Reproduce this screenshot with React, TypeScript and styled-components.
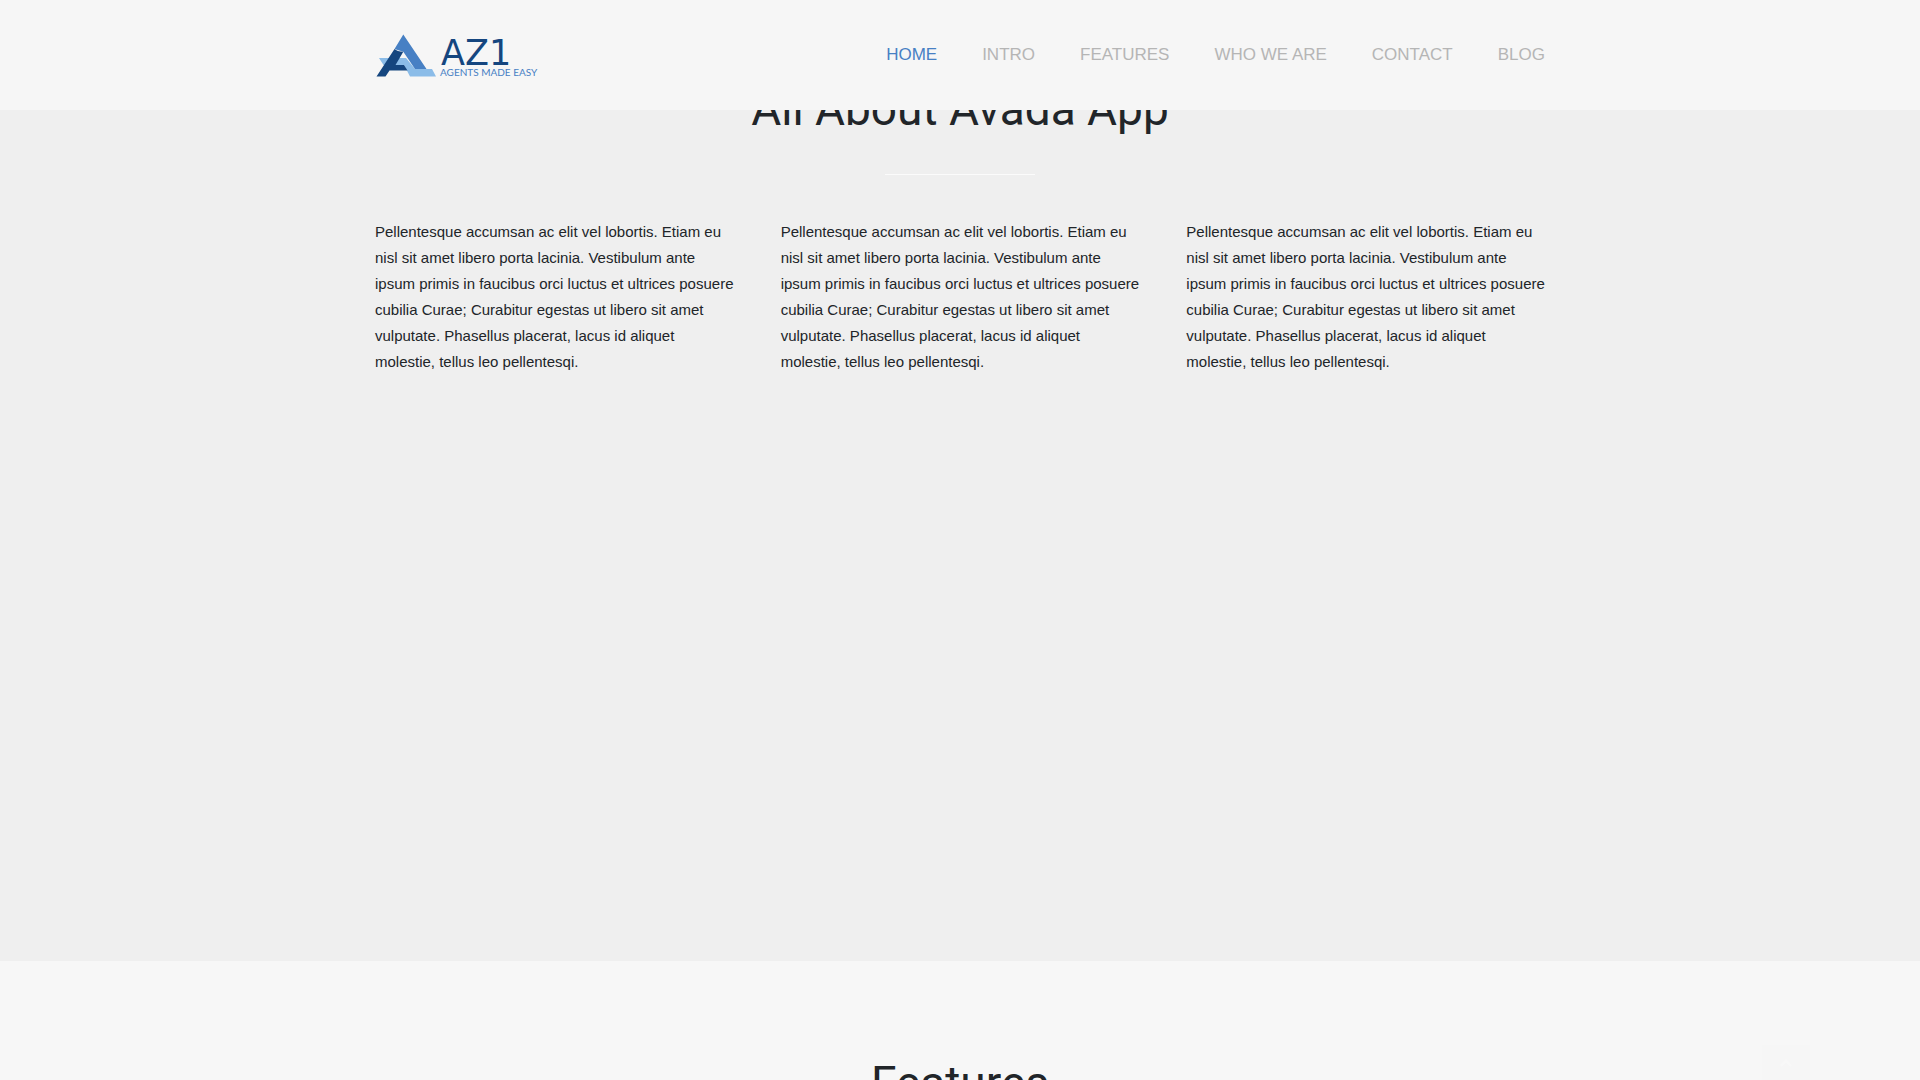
import React from "react";
import styled, { createGlobalStyle } from "styled-components";

const GlobalStyle = createGlobalStyle`
  *, *::before, *::after { box-sizing: border-box; }
  body {
    margin: 0;
    background: #f7f7f7;
    color: #212529;
    font-family: "Liberation Sans", Arial, sans-serif;
    font-size: 15px;
    line-height: 26px;
  }
`;

const Container = styled.div`
  width: 100%;
  max-width: 1230px;
  margin: 0 auto;
  padding: 0 30px;
`;

const Header = styled.header`
  position: fixed;
  top: 0;
  left: 0;
  right: 0;
  z-index: 10;
  background: #f6f6f6;
`;

const HeaderRow = styled(Container)`
  display: flex;
  align-items: center;
  justify-content: space-between;
  min-height: 110px;
`;

const LogoLink = styled.a`
  display: flex;
  text-decoration: none;

  svg {
    overflow: visible;
  }
`;

const Menu = styled.ul`
  display: flex;
  flex-wrap: wrap;
  gap: 0 45px;
  margin: 0;
  padding: 0;
  list-style: none;
`;

const MenuLink = styled.a<{ $active?: boolean }>`
  color: ${({ $active }) => ($active ? "#4780c4" : "#b5b5b5")};
  font-size: 17px;
  line-height: 26px;
  text-decoration: none;
  text-transform: uppercase;
`;

const Section = styled.section<{ $tone: string; $top: number; $bottom: number }>`
  background: ${({ $tone }) => $tone};
  padding: ${({ $top, $bottom }) => `${$top}px 0 ${$bottom}px`};
`;

const Title = styled.h2`
  margin: 0;
  font-family: Roboto, sans-serif;
  font-size: 46px;
  font-weight: 400;
  line-height: 60px;
  text-align: center;
`;

const Divider = styled.hr`
  width: 150px;
  height: 1px;
  margin: 35px auto 44px;
  border: 0;
  background: #fbfbfb;
`;

const Columns = styled.div`
  display: grid;
  grid-template-columns: repeat(3, 1fr);
  gap: 47px;
`;

const Text = styled.p`
  margin: 0;
`;

const ToTop = styled.button`
  position: fixed;
  right: 110px;
  bottom: 0;
  display: flex;
  align-items: center;
  justify-content: center;
  width: 48px;
  height: 35px;
  padding: 0;
  border: 0;
  background: #f6f6f6;
  color: #f8f8f8;
`;

const menu = [
  { label: "Home", href: "#home" },
  { label: "Intro", href: "#intro" },
  { label: "Features", href: "#features" },
  { label: "Who We Are", href: "#who-we-are" },
  { label: "Contact", href: "#contact" },
  { label: "Blog", href: "#blog" },
];

const blurb =
  "Pellentesque accumsan ac elit vel lobortis. Etiam eu nisl sit amet libero porta lacinia. Vestibulum ante ipsum primis in faucibus orci luctus et ultrices posuere cubilia Curae; Curabitur egestas ut libero sit amet vulputate. Phasellus placerat, lacus id aliquet molestie, tellus leo pellentesqi.";

function Logo() {
  return (
    <svg width="164" height="46" viewBox="0 0 164 46" role="img" aria-label="AZ1 Agents Made Easy">
      <path d="M4 26H31L40 37H57L61 44.500H35L29 33H8.500Z" fill="#8bbce8" />
      <path d="M28.300 2.500L51.500 37H40L28.300 19.700L19.500 17Z" fill="#4780c4" />
      <path d="M19.500 17Q22 19.500 28.300 19.700L20.500 33H29L32.500 38.500H14.500L10.500 44.500H1.500Z" fill="#15467f" />
      <text x="66" y="33" fill="#15467f" fontFamily="'DejaVu Sans', sans-serif" fontSize="35">AZ1</text>
      <text x="65" y="44" fill="#4780c4" fontFamily="Lato, sans-serif" fontSize="10">AGENTS MADE EASY</text>
    </svg>
  );
}

export default function App() {
  return (
    <>
      <GlobalStyle />
      <Header>
        <HeaderRow>
          <LogoLink href="#home"><Logo /></LogoLink>
          <nav aria-label="Main">
            <Menu>
              {menu.map((item, i) => (
                <li key={item.href}>
                  <MenuLink href={item.href} $active={i === 0}>{item.label}</MenuLink>
                </li>
              ))}
            </Menu>
          </nav>
        </HeaderRow>
      </Header>
      <main>
        <Section id="intro" $tone="#efefef" $top={79} $bottom={586}>
          <Container>
            <Title>All About Avada App</Title>
            <Divider />
            <Columns>
              <Text>{blurb}</Text>
              <Text>{blurb}</Text>
              <Text>{blurb}</Text>
            </Columns>
          </Container>
        </Section>
        <Section id="features" $tone="#f7f7f7" $top={92} $bottom={0}>
          <Container>
            <Title>Features</Title>
          </Container>
        </Section>
      </main>
      <ToTop type="button" aria-label="Back to top" onClick={() => window.scrollTo({ top: 0, behavior: "smooth" })}>
        <svg width="12" height="8" viewBox="0 0 12 8" fill="none" stroke="currentColor" strokeWidth="2" aria-hidden="true">
          <path d="M1 7L6 2L11 7" />
        </svg>
      </ToTop>
    </>
  );
}
